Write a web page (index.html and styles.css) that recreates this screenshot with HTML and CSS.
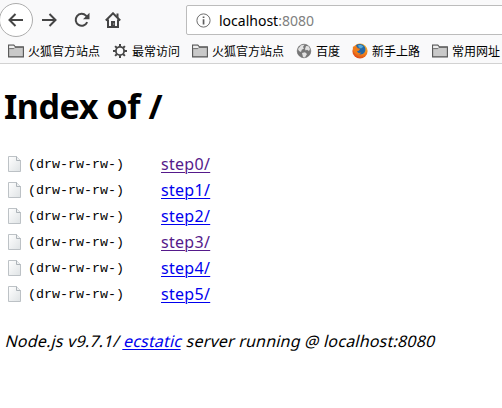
FILE: index.html
```html
<!DOCTYPE html>
<html lang="zh-CN">
<head>
<meta charset="utf-8">
<title>Index of /</title>
<link rel="stylesheet" href="styles.css">
</head>
<body>
<svg class="defs" width="0" height="0">
  <defs>
    <linearGradient id="paper" x1="0" y1="0" x2="1" y2="1"><stop offset="0" stop-color="#fff"/><stop offset="1" stop-color="#dfe3e5"/></linearGradient>
    <radialGradient id="flame" cx=".65" cy=".25" r=".85"><stop offset="0" stop-color="#ffcf3a"/><stop offset=".5" stop-color="#f68a1c"/><stop offset="1" stop-color="#d83b16"/></radialGradient>
    <symbol id="folder" viewBox="0 0 16 14"><path d="M.6 12.9V1.1h5.2l1.5 1.8h8.1v10z" fill="#c9c9c9" stroke="#555" stroke-width="1.1"/><path d="M1.2 4.6h4.6l1.2-1.2h7.8" fill="none" stroke="#666" stroke-width=".9"/><path d="M1.2 1.7h4.4l1.3 1.5-1.2.9H1.2z" fill="#eee"/></symbol>
    <symbol id="file" viewBox="0 0 13 16"><path d="M.5.5h8l4 4v11H.5z" fill="url(#paper)" stroke="#b5bbbf" stroke-width=".9"/><path d="M8.5.5v4h4" fill="#eef0f1" stroke="#a6adb2" stroke-width=".9"/></symbol>
  </defs>
</svg>
<header class="chrome">
  <div class="toolbar">
    <span class="back"><svg width="16" height="16" viewBox="0 0 16 16"><path d="M15 8H1.5M7.5 2L1.5 8l6 6"/></svg></span>
    <svg class="tool forward" width="16" height="16" viewBox="0 0 16 16"><path d="M1 8h13.5M8.5 2l6 6-6 6"/></svg>
    <svg class="tool reload" width="16" height="16" viewBox="0 0 16 16"><path d="M13.2 10.2A6 6 0 1 1 12 3.6l1.5 1.8"/><path class="solid" d="M15.5.8v6.5H9z"/></svg>
    <svg class="tool home" width="16" height="16" viewBox="0 0 16 16"><path d="M.8 8.5L8 1.3l7.2 7.2M3 7.5V15h10V7.5"/><path class="solid" d="M6 15V9h4v6zM11.5 1.5h2V6l-2-2z"/><path class="knob" d="M8.4 11.5h.8v1h-.8z"/></svg>
    <div class="address">
      <svg width="15" height="15" viewBox="0 0 15 15"><circle cx="7.5" cy="7.5" r="6.6" fill="none" stroke="#6d6d6d"/><path d="M6.7 3.4h1.7v1.7H6.7zM6.7 6.2h1.7v5.2H6.7z" fill="#5e5e5e"/></svg>
      <span class="host">localhost</span><span class="port">:8080</span>
    </div>
  </div>
  <nav class="bookmarks">
    <a class="mark"><svg width="16" height="14"><use href="#folder"/></svg><span>火狐官方站点</span></a>
    <a class="mark"><svg width="16" height="16" viewBox="0 0 16 16"><circle cx="8" cy="8" r="4.1" fill="none" stroke="#484848" stroke-width="1.8"/><path d="M8 1v2.7M8 12.3V15M1 8h2.7M12.3 8H15M3.1 3.1L5 5M11 11l1.9 1.9M12.9 3.1L11 5M5 11l-1.9 1.9" stroke="#484848" stroke-width="2"/></svg><span>最常访问</span></a>
    <a class="mark"><svg width="16" height="14"><use href="#folder"/></svg><span>火狐官方站点</span></a>
    <a class="mark"><svg width="16" height="16" viewBox="0 0 16 16"><circle cx="8" cy="8" r="6.8" fill="#777" stroke="#666" stroke-width=".6"/><path d="M2 6l3-3.8 3.5-.5L7 4l1 1.5-2.2 1.2L5 9 3 8zM10 3l2.6.3L14 6l-1 2-2-1.2-1.3.7L9 6zM6 10l3-.8L11 11l-2 3.4-2-.3z" fill="#e2e2e2"/></svg><span>百度</span></a>
    <a class="mark"><svg width="16" height="16" viewBox="0 0 16 16"><circle cx="8" cy="8" r="7.6" fill="url(#flame)"/><path d="M4 2.2C7 .1 11.2.7 13 4c1.1 2.8.3 5.8-2.2 7-3 1.2-6-.2-6.5-3l2.5-.5L5 5.5z" fill="#2468a7"/><path d="M6 2.3c2-.9 4.4-.3 5.3 1.5L9 5.4 6.9 4.6z" fill="#56a9d8"/><path d="M1 3.2l1.7 1 2.1-.5 1 1.6 2.5.5-1.5 1.7-1.7.7c.4 1.7 2.3 2.2 4.2 1.3-1 2.1-4.6 2.5-6.4.5C1.1 8.4.5 5.6 1 3.2z" fill="#ef7b19"/></svg><span>新手上路</span></a>
    <a class="mark"><svg width="16" height="14"><use href="#folder"/></svg><span>常用网址</span></a>
  </nav>
</header>
<main class="page">
  <h1>Index of /</h1>
  <table class="listing">
    <tr><td class="icon"><svg width="13" height="16"><use href="#file"/></svg></td><td class="perm">(drw-rw-rw-)</td><td><a class="visited" href="#">step0/</a></td></tr>
    <tr><td class="icon"><svg width="13" height="16"><use href="#file"/></svg></td><td class="perm">(drw-rw-rw-)</td><td><a href="#">step1/</a></td></tr>
    <tr><td class="icon"><svg width="13" height="16"><use href="#file"/></svg></td><td class="perm">(drw-rw-rw-)</td><td><a href="#">step2/</a></td></tr>
    <tr><td class="icon"><svg width="13" height="16"><use href="#file"/></svg></td><td class="perm">(drw-rw-rw-)</td><td><a class="visited" href="#">step3/</a></td></tr>
    <tr><td class="icon"><svg width="13" height="16"><use href="#file"/></svg></td><td class="perm">(drw-rw-rw-)</td><td><a href="#">step4/</a></td></tr>
    <tr><td class="icon"><svg width="13" height="16"><use href="#file"/></svg></td><td class="perm">(drw-rw-rw-)</td><td><a href="#">step5/</a></td></tr>
  </table>
  <address class="server">Node.js v9.7.1/ <a href="#">ecstatic</a> server running @ localhost:8080</address>
</main>
</body>
</html>
```
FILE: styles.css
```css
* { box-sizing: border-box; }
body { margin: 0; background: #fff; color: #000; font-family: "Noto Sans", "Noto Sans CJK SC", sans-serif; overflow: hidden; }
svg { display: block; flex: none; }
.defs { position: absolute; }
.chrome { height: 64px; background: #f9f9fa; border-bottom: 1px solid #d2d2d2; overflow: hidden; }
.toolbar { display: flex; align-items: center; height: 40px; }
.back { flex: none; display: flex; align-items: center; justify-content: center; width: 34px; height: 34px; margin-left: -1px; border: 1px solid #adadad; border-radius: 50%; background: #fff; }
.toolbar path { fill: none; stroke: #454545; stroke-width: 2; }
.toolbar .solid { fill: #454545; stroke: none; }
.toolbar .knob { fill: #fff; stroke: none; }
.forward { margin-left: 8px; }
.reload { margin-left: 17px; }
.home { margin-left: 15px; }
.address { flex: none; display: flex; align-items: center; width: 330px; height: 30px; margin-left: 65px; padding-left: 9px; border: 1px solid #bcbcbc; border-radius: 2px; background: #fff; font-size: 14px; }
.toolbar .address path { fill: #5e5e5e; stroke: none; }
.host { margin-left: 8px; }
.port { color: #808080; }
.bookmarks { display: flex; gap: 12px; height: 22px; padding-left: 8px; align-items: center; font: 12px/18px "Noto Sans CJK SC", sans-serif; white-space: nowrap; }
.mark { display: flex; align-items: center; gap: 4px; flex: none; }
.page { padding: 0 5px; }
h1 { margin: 18px 0 21px -1px; font-size: 34px; line-height: 48px; font-weight: 700; letter-spacing: -.4px; }
.listing { border-collapse: collapse; font-size: 16px; line-height: 26px; letter-spacing: .3px; }
.listing td { padding: 0; height: 26px; }
.icon { width: 23px; }
.icon svg { margin-left: 3px; }
.listing .perm { width: 133px; padding-top: 1px; font-family: "Liberation Mono", monospace; font-size: 13.33px; line-height: 25px; letter-spacing: 0; }
a[href] { color: #0000ee; text-underline-offset: 2px; text-decoration-thickness: 1px; }
a.visited { color: #551a8b; }
.server { width: max-content; margin: 22px 0 0 1px; font-size: 16px; line-height: 24px; font-style: normal; letter-spacing: .2px; transform: skewX(-14deg); white-space: nowrap; }
```
